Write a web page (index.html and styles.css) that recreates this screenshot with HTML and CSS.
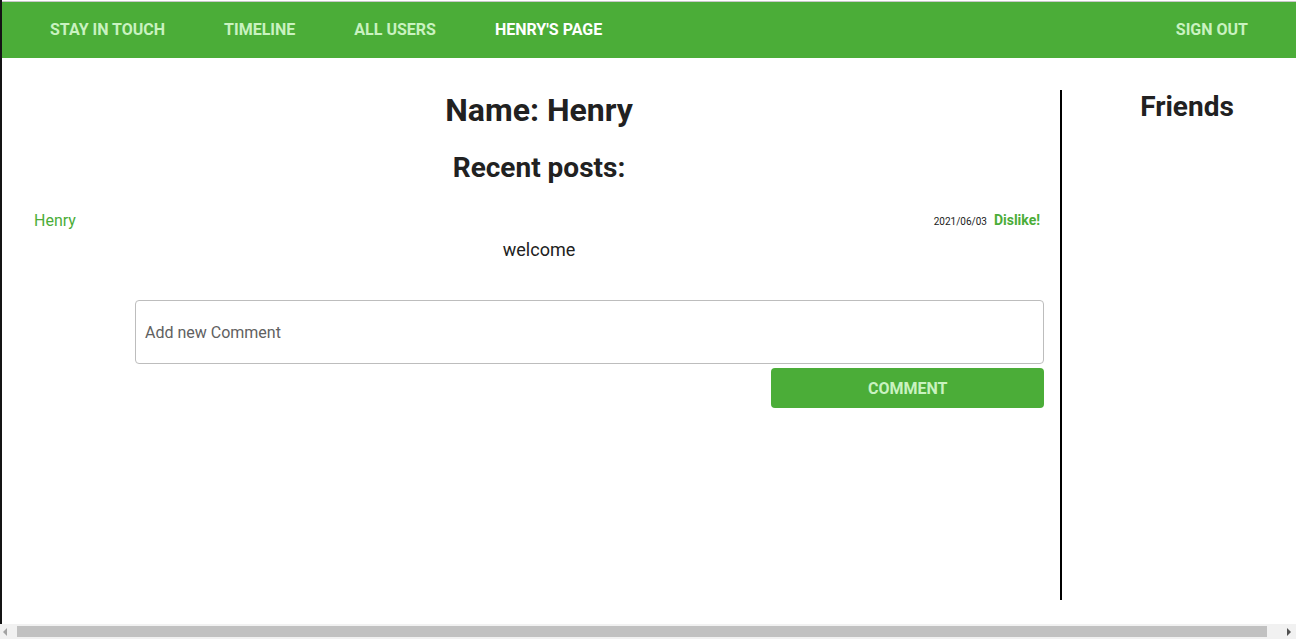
FILE: index.html
```html
<!DOCTYPE html>
<html>
<head>
<meta charset="utf-8">
<link rel="stylesheet" href="styles.css">
</head>
<body>
<div class="frame">
  <div class="page">
    <nav class="nav">
      <div class="nav-left">
        <a class="nav-link">Stay in touch</a>
        <a class="nav-link">Timeline</a>
        <a class="nav-link">All users</a>
        <a class="nav-link active">Henry's Page</a>
      </div>
      <a class="nav-link">Sign out</a>
    </nav>
    <div class="content">
      <main class="main">
        <h1 class="name">Name: Henry</h1>
        <h2 class="recent">Recent posts:</h2>
        <div class="post">
          <div class="post-head">
            <span class="author">Henry</span>
            <span class="meta"><span class="date">2021/06/03</span><span class="dislike">Dislike!</span></span>
          </div>
          <p class="post-body">welcome</p>
        </div>
        <form class="comment-form">
          <div class="comment-input">Add new Comment</div>
          <div class="btn-row"><button type="button" class="comment-btn">Comment</button></div>
        </form>
      </main>
      <aside class="friends">
        <h2 class="friends-title">Friends</h2>
      </aside>
    </div>
  </div>
  <div class="hscroll">
    <span class="arrow arrow-left"></span>
    <span class="thumb"></span>
    <span class="arrow arrow-right"></span>
  </div>
</div>
</body>
</html>
```
FILE: styles.css
```css
html, body {
  margin: 0;
  padding: 0;
  background: #fff;
  font-family: Roboto, "Liberation Sans", sans-serif;
  color: #212121;
}
.frame {
  height: 639px;
  display: flex;
  flex-direction: column;
  overflow: hidden;
}
.page {
  flex: 1;
  border-left: 2px solid #141414;
  padding-top: 1px;
  display: flex;
  flex-direction: column;
}
.nav {
  border-top: 1px solid #c8c8c8;
  background: #4bad38;
  height: 57px;
  display: flex;
  align-items: center;
  justify-content: space-between;
  padding: 0 48px 2px;
  box-sizing: border-box;
}
.nav-left {
  display: flex;
  gap: 59px;
}
.nav-link {
  font-weight: 700;
  font-size: 16px;
  text-transform: uppercase;
  color: #c9f2c0;
}
.nav-link.active {
  color: #fff;
}
.content {
  display: flex;
  flex: 1;
}
.main {
  flex: 1;
  margin-top: 32px;
  height: 510px;
  border-right: 2px solid #000;
  padding: 0 16px 0 32px;
}
.name {
  margin: 1px 0 0;
  font-size: 32px;
  line-height: 38px;
  text-align: center;
  font-weight: 700;
}
.recent {
  margin: 22px 0 0;
  font-size: 28px;
  line-height: 34px;
  text-align: center;
  font-weight: 700;
}
.post {
  margin-top: 25px;
}
.post-head {
  display: flex;
  justify-content: space-between;
  align-items: center;
  padding-right: 4px;
  height: 20px;
}
.author {
  color: #4bad38;
  font-size: 16px;
}
.meta {
  display: flex;
  align-items: center;
  gap: 7px;
}
.date {
  font-size: 10px;
  color: #212121;
  padding-top: 3px;
}
.dislike {
  color: #4bad38;
  font-weight: 700;
  font-size: 14px;
}
.post-body {
  margin: 9px 0 0;
  text-align: center;
  font-size: 18px;
  line-height: 22px;
}
.comment-form {
  margin: 39px 0 0 auto;
  width: 90%;
}
.comment-input {
  height: 62px;
  border: 1px solid #bdbdbd;
  border-radius: 4px;
  box-sizing: content-box;
  display: flex;
  align-items: center;
  padding: 0 9px;
  font-size: 16px;
  color: #616161;
}
.btn-row {
  display: flex;
  justify-content: flex-end;
  margin-top: 4px;
}
.comment-btn {
  width: 30%;
  height: 40px;
  border: none;
  border-radius: 4px;
  background: #4bad38;
  color: #c9f2c0;
  font-family: Roboto, "Liberation Sans", sans-serif;
  font-weight: 700;
  font-size: 16px;
  text-transform: uppercase;
  padding: 0;
}
.friends {
  width: 218px;
  padding-left: 16px;
}
.friends-title {
  margin: 32px 0 0;
  font-size: 28px;
  line-height: 34px;
  text-align: center;
  font-weight: 700;
}
.hscroll {
  height: 15px;
  background: #f1f1f1;
  display: flex;
  align-items: center;
}
.arrow {
  width: 0;
  height: 0;
  border-top: 4px solid transparent;
  border-bottom: 4px solid transparent;
}
.arrow-left {
  border-right: 4px solid #a3a3a3;
  margin: 0 10px 0 3px;
}
.arrow-right {
  border-left: 4px solid #505050;
  margin: 0 5px 0 20px;
}
.thumb {
  flex: 1;
  height: 11px;
  background: #c1c1c1;
}
```
